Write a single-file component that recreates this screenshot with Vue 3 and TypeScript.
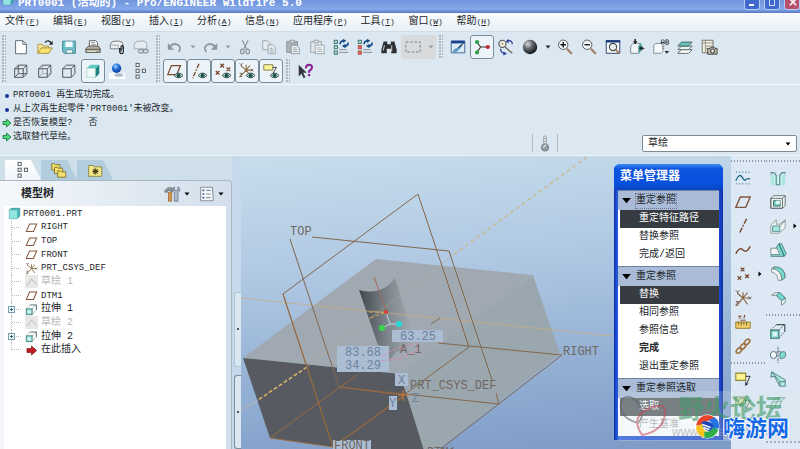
<script setup lang="ts">
import { ref } from 'vue'

interface Tool {
  id: string
  label: string
  pressed?: boolean
  arrow?: boolean
  framed?: boolean
}
interface MenuEntry {
  text: string
  key: string
}
interface Message {
  kind: 'info' | 'prompt'
  text: string
}
interface TreeNode {
  icon: string
  text: string
  cjk?: boolean
  dim?: boolean
  branch?: boolean
}
interface MenuSection {
  title: string
  items: { text: string; bold?: boolean; dim?: boolean }[]
  focus?: boolean
}

const menus: MenuEntry[] = [
  { text: '文件', key: 'F' },
  { text: '编辑', key: 'E' },
  { text: '视图', key: 'V' },
  { text: '插入', key: 'I' },
  { text: '分析', key: 'A' },
  { text: '信息', key: 'N' },
  { text: '应用程序', key: 'P' },
  { text: '工具', key: 'T' },
  { text: '窗口', key: 'W' },
  { text: '帮助', key: 'H' },
]

const toolRows: Tool[][][] = [
  [
    [
      { id: 'new', label: '新建' },
      { id: 'open', label: '打开' },
      { id: 'save', label: '保存' },
      { id: 'print', label: '打印' },
      { id: 'mail', label: '发送' },
      { id: 'link', label: '链接' },
    ],
    [
      { id: 'undo', label: '撤消', arrow: true },
      { id: 'redo', label: '重做', arrow: true },
      { id: 'cut', label: '剪切' },
      { id: 'copy', label: '复制' },
      { id: 'paste', label: '粘贴' },
      { id: 'paste2', label: '选择性粘贴' },
      { id: 'regen', label: '再生' },
      { id: 'regen2', label: '再生管理器' },
      { id: 'find', label: '查找' },
      { id: 'marquee', label: '选取框', arrow: true, framed: true },
    ],
    [
      { id: 'repaint', label: '重画' },
      { id: 'spin', label: '旋转中心', pressed: true },
      { id: 'orient', label: '定向模式' },
      { id: 'ball', label: '外观库', arrow: true },
      { id: 'zoomin', label: '放大' },
      { id: 'zoomout', label: '缩小' },
      { id: 'refit', label: '重新调整' },
      { id: 'reorient', label: '重定向' },
      { id: 'views', label: '已保存视图' },
      { id: 'layers', label: '层' },
      { id: 'viewmgr', label: '视图管理器' },
    ],
  ],
  [
    [
      { id: 'wire', label: '线框' },
      { id: 'hidden', label: '隐藏线' },
      { id: 'nohidden', label: '消隐' },
      { id: 'shaded', label: '着色', pressed: true },
      { id: 'realism', label: '增强的真实感' },
      { id: 'treeicon', label: '模型树' },
    ],
    [
      { id: 'vplane', label: '平面显示', pressed: true },
      { id: 'vaxis', label: '轴显示', pressed: true },
      { id: 'vpoint', label: '点显示', pressed: true },
      { id: 'vcsys', label: '坐标系显示', pressed: true },
      { id: 'vnote', label: '注释显示', pressed: true },
    ],
    [{ id: 'help', label: '上下文帮助' }],
  ],
]

const messages: Message[] = [
  { kind: 'info', text: 'PRT0001 再生成功完成。' },
  { kind: 'info', text: "从上次再生起零件'PRT0001'未被改变。" },
  { kind: 'prompt', text: '是否恢复模型?\u00a0\u00a0\u00a0否' },
  { kind: 'prompt', text: '选取替代草绘。' },
]

const treeNodes: TreeNode[] = [
  { icon: 'plane', text: 'RIGHT' },
  { icon: 'plane', text: 'TOP' },
  { icon: 'plane', text: 'FRONT' },
  { icon: 'csys', text: 'PRT_CSYS_DEF' },
  { icon: 'sketchdim', text: '草绘 1', cjk: true, dim: true },
  { icon: 'plane', text: 'DTM1' },
  { icon: 'extrude', text: '拉伸 1', cjk: true, branch: true },
  { icon: 'sketchdim', text: '草绘 2', cjk: true, dim: true },
  { icon: 'extrude', text: '拉伸 2', cjk: true, branch: true },
  { icon: 'insert', text: '在此插入', cjk: true },
]

const sections: MenuSection[] = [
  { title: '重定参照', focus: true, items: [{ text: '重定特征路径' }, { text: '替换参照' }, { text: '完成/返回' }] },
  {
    title: '重定参照',
    items: [{ text: '替换' }, { text: '相同参照' }, { text: '参照信息' }, { text: '完成', bold: true }, { text: '退出重定参照' }],
  },
  { title: '重定参照选取', items: [{ text: '选取' }, { text: '产生基准', dim: true }] },
]
const chosen = ref<number[]>([0, 0, 0])

const datumTools: Tool[][] = [
  [
    { id: 'sketch', label: '草绘' },
    { id: 'plane', label: '平面' },
    { id: 'axis', label: '轴' },
    { id: 'curve', label: '曲线' },
    { id: 'points', label: '点', arrow: true },
    { id: 'csys', label: '坐标系' },
    { id: 'analysis', label: '分析' },
    { id: 'chain', label: '参照' },
  ],
  [
    { id: 'note', label: '注释' },
    { id: 'note2', label: '传播注释' },
  ],
]
const featureTools: Tool[][] = [
  [
    { id: 'hole', label: '孔' },
    { id: 'shell', label: '壳' },
    { id: 'rib', label: '筋', arrow: true },
    { id: 'draft', label: '拔模' },
    { id: 'round', label: '倒圆角' },
    { id: 'chamfer', label: '倒角' },
  ],
  [
    { id: 'extrude', label: '拉伸' },
    { id: 'revolve', label: '旋转' },
    { id: 'sweep', label: '扫描' },
    { id: 'blend', label: '边界混合' },
  ],
]
const palette = [datumTools, featureTools]

const tabs = ['treeicon', 'folders', 'favorites']
const tabLabels = ['模型树', '文件夹浏览器', '收藏夹']
const activeTab = ref(0)
const filter = ref('草绘')
</script>

<template>
  <svg class="sprite" aria-hidden="true">
    <defs>
      <radialGradient id="gBall" cx=".35" cy=".3" r=".7">
        <stop offset="0" stop-color="#d8dcdf" /><stop offset=".45" stop-color="#666b70" /><stop offset="1" stop-color="#15181b" />
      </radialGradient>
      <radialGradient id="gBlue" cx=".4" cy=".3" r=".7">
        <stop offset="0" stop-color="#b7dcff" /><stop offset=".4" stop-color="#2a7be0" /><stop offset="1" stop-color="#073a9c" />
      </radialGradient>
    </defs>
    <symbol id="eye" viewBox="0 0 10 8"><path d="M0 4Q5-1.500 10 4Q5 9 0 4Z" fill="#cfe5df" stroke="#27433e" /><circle cx="5" cy="4" r="2.300" fill="#19584c" /></symbol>
    <symbol id="new" viewBox="0 0 20 20"><path d="M4 3h8l4 4V17.500H4Z" fill="#fff" stroke="#555e66" /><path d="M12 3v4h4" fill="none" stroke="#555e66" /></symbol>
    <symbol id="open" viewBox="0 0 20 20"><path d="M2 17V7h5l1 2h6v3" fill="#f7e69a" stroke="#a8923c" /><path d="M2 17l4-6h12l-4 6Z" fill="#f9e46d" stroke="#a08a32" /><path d="M10 5q4-4 7 1" fill="none" stroke="#222" stroke-width="1.300" /><path d="M18.500 3v4.500h-4Z" fill="#222" /></symbol>
    <symbol id="save" viewBox="0 0 20 20"><path d="M3 3.500h14v13.500h-12l-2-2Z" fill="#6fc2cb" stroke="#2f7f8c" /><path d="M6 4h8v6H6Z" fill="#f3fbfb" /><path d="M7 13h7v4H7Z" fill="#e5eef0" stroke="#47828b" stroke-width=".7" /></symbol>
    <symbol id="print" viewBox="0 0 20 20"><path d="M6 10V3h7l2 2v5" fill="#fff" stroke="#55595d" /><path d="M8 5h4M8 7h5M8 9h5" stroke="#888" /><path d="M2 12l3-3h11l2 3v4H2Z" fill="#b9b5a6" stroke="#4d4d49" /><path d="M2 12.500h16" stroke="#4d4d49" /><path d="M4 15h9" stroke="#e9e6d4" /></symbol>
    <symbol id="mail" viewBox="0 0 20 20"><path d="M2.500 12V7q1-3.500 5-3.500h5q4 0 4 4V12Z" fill="#edf1f3" stroke="#6b7075" /><path d="M2.500 8h9v4" fill="none" stroke="#9aa0a4" /><path d="M13 11v4q0 2.500 2 2.500t2-2.500V10q0-1.500-1.300-1.500T14.500 10v5" fill="none" stroke="#111" stroke-width="1.200" /></symbol>
    <symbol id="link" viewBox="0 0 20 20"><g opacity=".55"><path d="M2.500 12V7q1-3.500 5-3.500h5q4 0 4 4V12Z" fill="#edf1f3" stroke="#6b7075" /><rect x="7" y="13" width="6" height="3.500" rx="1.700" fill="none" stroke="#555" stroke-width="1.400" /><rect x="12" y="13" width="6" height="3.500" rx="1.700" fill="none" stroke="#555" stroke-width="1.400" /></g></symbol>
    <symbol id="undo" viewBox="0 0 20 20"><path d="M4 10q4-5 9-2.500q5 3 1 8" fill="none" stroke="#8d979e" stroke-width="1.900" /><path d="M2 5.500v7.500h7Z" fill="#8d979e" /></symbol>
    <symbol id="redo" viewBox="0 0 20 20"><path d="M16 10q-4-5-9-2.500q-5 3-1 8" fill="none" stroke="#8d979e" stroke-width="1.900" /><path d="M18 5.500v7.500h-7Z" fill="#8d979e" /></symbol>
    <symbol id="cut" viewBox="0 0 20 20"><g fill="none" stroke="#8a949b" stroke-width="1.300"><path d="M7 2.500l5 10M13.500 2.500l-5 10" /><ellipse cx="7" cy="15" rx="2" ry="2.600" /><ellipse cx="13" cy="15" rx="2" ry="2.600" /></g></symbol>
    <symbol id="copy" viewBox="0 0 20 20"><g fill="#e6ecef" stroke="#98a2a8"><path d="M3 3h5l3 3v7H3Z" /><path d="M9 7.500h5l3 3v7H9Z" /><path d="M11 11.500h3M11 13.500h4M11 15.500h4" /></g></symbol>
    <symbol id="paste" viewBox="0 0 20 20"><path d="M3 4h12v12H3Z" fill="#aab5ba" stroke="#87939a" /><path d="M6.500 2.500h5v3h-5Z" fill="#dce3e6" stroke="#87939a" /><path d="M8 8h6l3 3v6.500H8Z" fill="#edf1f3" stroke="#8a949b" /><path d="M10 11h4M10 13h5M10 15h5" stroke="#98a2a8" /></symbol>
    <symbol id="paste2" viewBox="0 0 20 20"><path d="M3 4h12v12H3Z" fill="#e0e6e9" stroke="#98a2a8" /><path d="M6.500 2.500h5v3h-5Z" fill="#dce3e6" stroke="#98a2a8" /><path d="M8 8h10v9.500H8Z" fill="#f2f5f6" stroke="#98a2a8" /><path d="M10 11h5M10 13h6M10 15h6" stroke="#a8b2b8" /></symbol>
    <symbol id="regen" viewBox="0 0 20 20"><g fill="#a8dcd6" stroke="#3d6b6a"><rect x="2.500" y="2.500" width="3.500" height="3.500" /><rect x="2.500" y="8.500" width="3.500" height="3.500" /><rect x="2.500" y="14.500" width="3.500" height="3.500" /></g><path d="M9 7q0-4 4-4M18 5q0 4-4 4" fill="none" stroke="#124a86" stroke-width="1.800" /><path d="M12 .800l4 2.200-4 2.500ZM15 6.500l-4 2.500 4 2.500Z" fill="#124a86" /><path d="M8 13h8M8 16h10" stroke="#7d878c" /></symbol>
    <symbol id="regen2" viewBox="0 0 20 20"><g stroke="#3d6b6a"><rect x="2.500" y="2.500" width="3.500" height="3.500" fill="#a8dcd6" /><g fill="#e06d60" stroke="#b14a40"><rect x="2.500" y="8.500" width="3.500" height="3.500" /><rect x="2.500" y="14.500" width="3.500" height="3.500" /></g></g><path d="M9 7q0-4 4-4M18 5q0 4-4 4" fill="none" stroke="#124a86" stroke-width="1.800" /><path d="M12 .800l4 2.200-4 2.500ZM15 6.500l-4 2.500 4 2.500Z" fill="#124a86" /><path d="M8 13h8M8 16h10" stroke="#7d878c" /></symbol>
    <symbol id="find" viewBox="0 0 20 20"><path d="M4 4h4v3h4V4h4l2.500 9v4h-6v-5h-5v5h-6v-4Z" fill="#2b2d30" /><path d="M5 8l-1.500 6M13 8v7" stroke="#b9bdc1" stroke-width="1.200" /></symbol>
    <symbol id="marquee" viewBox="0 0 20 20"><rect x="2" y="4.500" width="16" height="11" fill="none" stroke="#777d81" stroke-dasharray="3 1.800" /></symbol>
    <symbol id="repaint" viewBox="0 0 20 20"><path d="M2.500 3.500h15v13h-15Z" fill="#dcecf5" stroke="#3a5e92" /><path d="M2.500 3h15v3h-15Z" fill="#18428e" /><path d="M4 16q1-5 6-5l3-4 2 2-4 4q-2 3-7 3Z" fill="#5a9bc6" /><path d="M10 11l6-5" stroke="#33424e" stroke-width="1.200" /></symbol>
    <symbol id="spin" viewBox="0 0 20 20"><path d="M4.500 5l4 5h8M8.500 10l-4 6" fill="none" stroke="#3a2b28" stroke-width="1.200" /><circle cx="4.500" cy="4.500" r="2.300" fill="#2ca048" /><circle cx="16.500" cy="10" r="2.300" fill="#c22532" /><circle cx="4.500" cy="16" r="2.300" fill="#2ca048" /></symbol>
    <symbol id="orient" viewBox="0 0 20 20"><circle cx="6" cy="6.500" r="4" fill="#eef2ee" stroke="#555" stroke-width="1.200" /><circle cx="6" cy="6.500" r="1.500" fill="#c9b877" /><path d="M9 10l8 7" stroke="#6d6a63" stroke-width="1.500" /><path d="M12 3q5-1 5 4M4 12q0 5 5 5" fill="none" stroke="#2a3c9c" stroke-width="1.400" /><path d="M13 .800v5l-3.500-2ZM7 15l4 2.500-4 2Z" fill="#2a3c9c" /></symbol>
    <symbol id="ball" viewBox="0 0 20 20"><circle cx="10" cy="10" r="8" fill="url(#gBall)" /></symbol>
    <symbol id="zoomin" viewBox="0 0 20 20"><path d="M12 12l5.500 5.500" stroke="#a07a62" stroke-width="2.200" /><circle cx="8" cy="7.500" r="5.200" fill="#f3f7f8" stroke="#555b5f" stroke-width="1.100" /><path d="M5 7.500h6M8 4.500v6" stroke="#111" stroke-width="1.500" /></symbol>
    <symbol id="zoomout" viewBox="0 0 20 20"><path d="M12 12l5.500 5.500" stroke="#a07a62" stroke-width="2.200" /><circle cx="8" cy="7.500" r="5.200" fill="#f3f7f8" stroke="#555b5f" stroke-width="1.100" /><path d="M5 7.500h6" stroke="#111" stroke-width="1.500" /></symbol>
    <symbol id="refit" viewBox="0 0 20 20"><path d="M2.500 3h15v14h-15Z" fill="#f7fafb" stroke="#24365c" /><path d="M2 2.500h16v2.500H2Z" fill="#1a3a80" /><path d="M13 13l4 4" stroke="#a07a62" stroke-width="2" /><circle cx="10" cy="10" r="4" fill="#e5eff4" stroke="#444" stroke-width="1.200" /></symbol>
    <symbol id="reorient" viewBox="0 0 20 20"><path d="M3 9l3-3h8l-2 3v8H3Z" fill="#f1f7f7" stroke="#6e8584" /><path d="M12 9l3-3v8l-3 3Z" fill="#2f9c90" /><path d="M8 1v3M18 11.500h-2" stroke="#1a1a1a" stroke-width="1.600" /><path d="M5.500 3.500h5L8 7ZM16 9v5l-4-2.500Z" fill="#1a1a1a" /></symbol>
    <symbol id="views" viewBox="0 0 20 20"><path d="M2 8l2-2h8v9l-2 2H2Z" fill="#f7fafb" stroke="#7b898c" /><g fill="none" stroke="#333"><path d="M10.500 7V3l1-1h1l1 1v4M10.500 5h3M15.500 7V2h2l1 1v1l-1 .500h-2M17.500 4.500l1 1V6.500l-1 .500h-2" /></g><path d="M14 14.500h5l-2.500 3Z" fill="#222" /><path d="M13 9v4" stroke="#555" stroke-dasharray="1 1" /></symbol>
    <symbol id="layers" viewBox="0 0 20 20"><g stroke="#55605f"><path d="M2 17l4-4h12l-4 4Z" fill="#fff" /><path d="M2 13l4-4h12l-4 4Z" fill="#e5f4f1" /><path d="M2 9l4-4.500h12L14 9Z" fill="#61c6b5" /></g></symbol>
    <symbol id="viewmgr" viewBox="0 0 20 20"><path d="M2.500 2.500h12v14h-12Z" fill="#f6f2e4" stroke="#6b6a63" /><path d="M2.500 5.500h12M6 2.500v14M6 9h8M6 12h4" stroke="#8b8a80" /><path d="M8.500 11.500h3l1-1.500h3l1 1.500h2.500v6.500H8.500Z" fill="#b8b7ab" stroke="#3e3e3b" /><circle cx="14" cy="14.500" r="2.200" fill="#ecebe2" stroke="#222" /></symbol>
    <symbol id="wire" viewBox="0 0 20 20"><path d="M3 7.500h9.500V17H3ZM7 3.500h9.500V13H7ZM3 7.500l4-4M12.500 7.500l4-4M12.500 17l4-4M3 17l4-4" fill="none" stroke="#55585b" stroke-width="1.100" /></symbol>
    <symbol id="hidden" viewBox="0 0 20 20"><path d="M7 3.500V13h9.500M3 17l4-4" fill="none" stroke="#a3a9ad" /><path d="M3 7.500h9.500V17H3ZM3 7.500l4-4h9.500V13l-4 4M12.500 7.500l4-4" fill="none" stroke="#55585b" stroke-width="1.100" /></symbol>
    <symbol id="nohidden" viewBox="0 0 20 20"><path d="M3 7.500h9.500V17H3ZM3 7.500l4-4h9.500V13l-4 4M12.500 7.500l4-4" fill="none" stroke="#55585b" stroke-width="1.100" /></symbol>
    <symbol id="shaded" viewBox="0 0 20 20"><path d="M3 7l4-4h10l-4 4Z" fill="#5ec9c2" /><path d="M3 7h10v10H3Z" fill="#f1fbfa" stroke="#8ec3c0" stroke-width=".7" /><path d="M13 7l4-4v10l-4 4Z" fill="#1f837f" /></symbol>
    <symbol id="realism" viewBox="0 0 20 20"><path d="M1 12h18v7H1Z" fill="#fbfdff" /><ellipse cx="12" cy="14.500" rx="5" ry="2" fill="#b0bccb" /><circle cx="9.500" cy="7" r="5.200" fill="url(#gBlue)" /></symbol>
    <symbol id="treeicon" viewBox="0 0 20 20"><g fill="#f6f8f9" stroke="#4d5357"><rect x="4.500" y="1.500" width="3.500" height="3.500" /><rect x="4.500" y="8" width="3.500" height="3.500" /><rect x="4.500" y="14.500" width="3.500" height="3.500" /><rect x="11.500" y="8" width="3.500" height="3.500" /></g></symbol>
    <symbol id="vplane" viewBox="0 0 20 20"><path d="M6 4h10l-4 10H2Z" fill="none" stroke="#7c4a30" stroke-width="1.400" /><use href="#eye" x="9" y="11" width="10" height="8" /></symbol>
    <symbol id="vaxis" viewBox="0 0 20 20"><path d="M10 2L3 18" stroke="#7c4a30" stroke-width="1.500" stroke-dasharray="5 1.500 2 1.500" /><use href="#eye" x="9" y="11" width="10" height="8" /></symbol>
    <symbol id="vpoint" viewBox="0 0 20 20"><path d="M7 2l4 4M11 2L7 6M14 6l4 4M18 6l-4 4M2 10l4 4M6 10l-4 4" stroke="#7c4a30" stroke-width="1.500" /><use href="#eye" x="9" y="11" width="10" height="8" /></symbol>
    <symbol id="csys" viewBox="0 0 20 20"><path d="M10 10V3.500M10 10l7 0M10 10l-6 7M10 10L4 5M10 10l5-6M10 10l5 7" stroke="#8a6a42" stroke-width="1.300" /><path d="M2 1.500l2 2 2-2M4 3.500v2M16 8.500l3 3M19 8.500l-3 3M2 14h3l-3 4h3" fill="none" stroke="#5d4b39" stroke-width="1" /></symbol>
    <symbol id="vcsys" viewBox="0 0 20 20"><use href="#csys" width="18" height="18" /><use href="#eye" x="9" y="11" width="10" height="8" /></symbol>
    <symbol id="vnote" viewBox="0 0 20 20"><path d="M2 3h10v6H2Z" fill="#fbf59a" stroke="#7c7740" /><path d="M12 6h4l-4 7" fill="none" stroke="#333" /><use href="#eye" x="9" y="11" width="10" height="8" /></symbol>
    <symbol id="help" viewBox="0 0 20 20"><path d="M3 3v13l3-3 2.500 5 2-1-2.500-5h4Z" fill="#33373b" /><path d="M11 7q0-4 3.500-4t3.300 3.200q0 2-3.300 4v1.800" fill="none" stroke="#8a1c93" stroke-width="2.200" /><circle cx="14.500" cy="14.500" r="1.400" fill="#8a1c93" /></symbol>
    <symbol id="folders" viewBox="0 0 20 20"><g fill="#f5e26c" stroke="#7f7330"><path d="M2 3h3l1 1h5v6H2Z" /><path d="M5 7h3l1 1h5v6H5Z" /><path d="M8.500 11h3l1 1h5v6h-9Z" /></g></symbol>
    <symbol id="favorites" viewBox="0 0 20 20"><path d="M3 5h5l1 1.500h8.500v10.500H3Z" fill="#f4e987" stroke="#8c8242" /><path d="M10.300 8v7M7 11.500h7M8 9l5 5M13 9l-5 5" stroke="#464018" stroke-width="1.200" /></symbol>
    <symbol id="settings" viewBox="0 0 20 20"><path d="M1 6q4-5 9-2v3H7V6H4v2H1Z" fill="#8f9aa2" stroke="#59636a" stroke-width=".700" /><path d="M5 8h3.500v10H5Z" fill="#d6954a" stroke="#8a5a24" stroke-width=".700" /><path d="M11.500 2v4h4V2q4 3 0 7v9h-4V9q-4-4 0-7Z" fill="#aebecb" stroke="#566775" stroke-width=".800" /></symbol>
    <symbol id="show" viewBox="0 0 20 20"><path d="M3 2.500h13l1 15H3Z" fill="#f5f8fb" stroke="#7a858f" /><path d="M5 6h2M5 10h2M5 14h2" stroke="#3a5a8a" stroke-width="1.800" /><path d="M9 6h5M9 10h5M9 14h5" stroke="#8994a0" stroke-width="1.200" /></symbol>
    <symbol id="part" viewBox="0 0 20 20"><path d="M2 5l3-3h13v12l-4 4H2Z" fill="#44b9b8" stroke="#2f7f86" /><path d="M2 5h12v13H2Z" fill="#92e4e0" /></symbol>
    <symbol id="plane" viewBox="0 0 20 20"><path d="M7 4.500h11l-5 11.500H2Z" fill="none" stroke="#83583f" stroke-width="1.600" /></symbol>
    <symbol id="sketchdim" viewBox="0 0 20 20"><path d="M0 0h20v20H0Z" fill="#e7e8e6" /><path d="M2 15q5-1 6-6t4-1 6 7" fill="none" stroke="#b4b5b2" stroke-width="1.300" /></symbol>
    <symbol id="extrude" viewBox="0 0 20 20"><path d="M2 9h9v9H2Z" fill="#9ce0da" stroke="#2e6e6c" stroke-width="1.200" /><path d="M4.500 11.500h4v4h-4Z" fill="#e3f8f5" /><path d="M2 9l6-6M11 9l6-6M11 18l6-7" stroke="#4d6e6d" stroke-dasharray="2 1" /><path d="M8 3h9.500v8" fill="none" stroke="#3d5756" stroke-width="1.300" /></symbol>
    <symbol id="insert" viewBox="0 0 20 20"><path d="M3 7h7V3l8 7-8 7v-4H3Z" fill="#c11d23" stroke="#6e1014" /></symbol>
    <symbol id="prompt" viewBox="0 0 20 20"><path d="M2 7h7V2l9 8-9 8v-5H2Z" fill="#49d878" stroke="#1d6b38" stroke-width="1.600" /></symbol>
    <symbol id="sketch" viewBox="0 0 20 20"><path d="M2 3.500h17M2 16.500h17" stroke="#3d6f98" stroke-dasharray="1.500 2" /><path d="M2 13q4-9 7-4t4 3 5-1" fill="none" stroke="#1f6689" stroke-width="1.400" /></symbol>
    <symbol id="axis" viewBox="0 0 20 20"><path d="M14 2L6 18" stroke="#77492f" stroke-width="1.600" stroke-dasharray="6 1.500 2 1.500" /></symbol>
    <symbol id="curve" viewBox="0 0 20 20"><path d="M2 14q4-8 8-4t8-4" fill="none" stroke="#77492f" stroke-width="1.600" /></symbol>
    <symbol id="points" viewBox="0 0 20 20"><path d="M7.500 3l4 4M11.500 3l-4 4M12.500 10.500l4 4M16.500 10.500l-4 4M4 12.500l4 4M8 12.500l-4 4" stroke="#77492f" stroke-width="1.400" /></symbol>
    <symbol id="analysis" viewBox="0 0 20 20"><path d="M5 3l3 3M8 3L5 6M12 2l-1 4" stroke="#7c4a30" stroke-width="1.300" /><path d="M2 10h16v7H2Z" fill="#efcf68" stroke="#92722d" /><path d="M5 10v3M8 10v4M11 10v3M14 10v4" stroke="#6f5620" /><path d="M7 8h6" stroke="#7c4a30" /></symbol>
    <symbol id="chain" viewBox="0 0 20 20"><g fill="none" stroke="#a0713f" stroke-width="1.800"><ellipse cx="5.500" cy="15" rx="3.600" ry="2.300" transform="rotate(-45 5.500 15)" /><ellipse cx="10" cy="10.500" rx="3.600" ry="2.300" transform="rotate(-45 10 10.500)" /><ellipse cx="14.500" cy="5.500" rx="3.600" ry="2.300" transform="rotate(-45 14.500 5.500)" /></g></symbol>
    <symbol id="note" viewBox="0 0 20 20"><path d="M2 3.500h11v8H2Z" fill="#fbf48d" stroke="#8d8333" stroke-width="1.200" /><path d="M13 7h5l-5 10M13 17v-4M13 17l3-2" fill="none" stroke="#333" stroke-width="1.100" /></symbol>
    <symbol id="note2" viewBox="0 0 20 20"><path d="M2 3.500h11v8H2Z" fill="#e3ecaa" stroke="#7b9a62" stroke-width="1.200" /><circle cx="9" cy="9" r="4" fill="none" stroke="#6ba278" stroke-width="1.300" /><path d="M13 7h5l-5 10M13 17v-4M13 17l3-2" fill="none" stroke="#5d7c5f" stroke-width="1.100" /></symbol>
    <symbol id="hole" viewBox="0 0 20 20"><path d="M2 7h4v11H2ZM14 7h4v11h-4Z" fill="#a9e8e2" /><path d="M6 8h8v10H6Z" fill="#d3f4f0" /><path d="M1.500 4h4l2.500 3v10.500h4V7l2.500-3h4" fill="none" stroke="#4f8a89" stroke-width="1.300" /><path d="M1.500 7l3-3M18.500 7l-3-3" stroke="#7aa5a4" /></symbol>
    <symbol id="shell" viewBox="0 0 20 20"><path d="M2 6l3-3h13v11l-3 3H2Z" fill="#eef3f2" stroke="#61706f" /><path d="M2 6h13v11H2ZM15 6l3-3" fill="none" stroke="#61706f" /><path d="M5 8.500h7.500v6H5Z" fill="#6ccfc7" stroke="#3c6664" /><path d="M7.500 8.500h5v4h-5Z" fill="#d9f5f1" /></symbol>
    <symbol id="rib" viewBox="0 0 20 20"><path d="M2 9l6-6v5h4l6-5v9l-7 6H2Z" fill="#eef4f3" stroke="#8b9a9a" /><path d="M4 10h8v6H4Z" fill="#a2e8e0" stroke="#53908c" /><path d="M12 10l6-6" stroke="#6b7f7e" /></symbol>
    <symbol id="draft" viewBox="0 0 20 20"><path d="M2 17h15l2-3L14 3h-3Z" fill="#7edcd4" stroke="#4d7b79" /><path d="M2 8h7l3 7H2Z" fill="#eff5f4" stroke="#748a89" /><path d="M11 3l6 14" stroke="#33716e" stroke-width="1.200" /></symbol>
    <symbol id="round" viewBox="0 0 20 20"><path d="M3 4l3-2q12 0 12 12l-4 3Q14 5 3 4Z" fill="#77d8d0" stroke="#4d6e6d" /><path d="M3 4v4q7 1 7 9h4Q14 5 3 4Z" fill="#f4f7f6" stroke="#7d908f" /></symbol>
    <symbol id="chamfer" viewBox="0 0 20 20"><path d="M3 7l4-3h5l6 6v5l-4 3v-5L8 7Z" fill="#eef4f3" stroke="#748a89" /><path d="M8 7l4-3 6 6-4 3Z" fill="#77d8d0" stroke="#3f7b77" /></symbol>
    <symbol id="revolve" viewBox="0 0 20 20"><path d="M10 1v18" stroke="#4b5f66" stroke-dasharray="3 1.200" /><ellipse cx="5" cy="10" rx="3.500" ry="4" fill="#f2f6f5" stroke="#567" /><path d="M12 8q6-4 6.500 1t-6 5Z" fill="#7edcd4" stroke="#4d7b79" /><path d="M8 7q3-3 6 0" fill="none" stroke="#678" /></symbol>
    <symbol id="sweep" viewBox="0 0 20 20"><path d="M3 2l15 9v7h-6L6 7 2 8Z" fill="#aeeae4" stroke="#4f7977" /><path d="M3 2l9 11h6M12 13v5" fill="none" stroke="#4f7977" /></symbol>
    <symbol id="blend" viewBox="0 0 20 20"><path d="M2 16q0-10 8-12l8 0q-6 3-6 12Z" fill="#c8eee6" stroke="#6f9d94" /><path d="M4 9l10-1M7 16q0-9 7-12" fill="none" stroke="#6f9d94" /></symbol>
    <symbol id="thermo" viewBox="0 0 20 20"><path d="M8.500 3q1.500-2 3 0v8h-3Z" fill="#eef2f3" stroke="#929ca1" /><path d="M8.500 5h3M8.500 8h3" stroke="#929ca1" /><circle cx="10" cy="15" r="4" fill="#8f9a9e" stroke="#6e7a7f" /><path d="M8 15l3-3" stroke="#e6ecee" stroke-width="1.400" /></symbol>
    <symbol id="down" viewBox="0 0 10 10"><path d="M2.500 3.500h5L5 6.500Z" /></symbol>
    <symbol id="right" viewBox="0 0 10 10"><path d="M3.500 2.500v5L6.500 5Z" /></symbol>
    <symbol id="tri" viewBox="0 0 12 8"><path d="M1 1h10L6 7Z" /></symbol>
  </svg>

  <div class="window">
    <header class="titlebar">
      <svg class="app-icon"><use href="#part" /></svg>
      <h1>PRT0001 (活动的) - Pro/ENGINEER Wildfire 5.0</h1>
      <div class="caption">
        <button aria-label="最小化"><i class="min"></i></button>
        <button aria-label="最大化"><i class="max"></i></button>
        <button class="close" aria-label="关闭">
          <svg viewBox="0 0 10 10"><path d="M1 1l8 8M9 1l-8 8" stroke="#fff" stroke-width="2" /></svg>
        </button>
      </div>
    </header>

    <nav class="menubar">
      <button v-for="m in menus" :key="m.key">{{ m.text }}<span class="key">(<u>{{ m.key }}</u>)</span></button>
    </nav>

    <div class="toolbars">
      <div v-for="(row, r) in toolRows" :key="r" class="toolrow">
        <template v-for="(group, g) in row" :key="g">
          <span class="grip"></span>
          <span v-for="t in group" :key="t.id" class="tool" :class="{ framed: t.framed }">
            <button :class="{ pressed: t.pressed }" :aria-label="t.label"><svg><use :href="'#' + t.id" /></svg></button>
            <button v-if="t.arrow" class="arrow" :class="{ faint: g === 1 }" :aria-label="t.label + '选项'"><svg><use href="#down" /></svg></button>
          </span>
        </template>
      </div>
    </div>

    <section class="messages">
      <ul>
        <li v-for="(m, i) in messages" :key="i">
          <svg v-if="m.kind === 'prompt'"><use href="#prompt" /></svg>
          <i v-else class="bullet"></i>
          <span>{{ m.text }}</span>
        </li>
      </ul>
      <div class="status">
        <span class="gauge"><svg><use href="#thermo" /></svg></span>
        <label class="filter">
          <select v-model="filter" aria-label="选取过滤器">
            <option>草绘</option>
          </select>
          <svg><use href="#down" /></svg>
        </label>
      </div>
    </section>

    <main>
      <aside class="navigator">
        <div class="tabs">
          <button
            v-for="(t, i) in tabs"
            :key="t"
            :class="{ active: i === activeTab }"
            :aria-label="tabLabels[i]"
            @click="activeTab = i"
          >
            <svg><use :href="'#' + t" /></svg>
          </button>
        </div>
        <div class="panel">
          <div class="panel-head">
            <h2>模型树</h2>
            <button aria-label="设置"><svg><use href="#settings" /></svg><svg class="tiny"><use href="#down" /></svg></button>
            <button aria-label="显示"><svg><use href="#show" /></svg><svg class="tiny"><use href="#down" /></svg></button>
          </div>
          <div class="tree-box">
            <ul class="tree">
              <li class="root"><svg><use href="#part" /></svg><span>PRT0001.PRT</span></li>
              <li v-for="(n, i) in treeNodes" :key="i" :class="{ cjk: n.cjk, dim: n.dim }">
                <span class="rail">
                  <button v-if="n.branch" :aria-label="'展开 ' + n.text"></button>
                </span>
                <svg><use :href="'#' + n.icon" /></svg>
                <span>{{ n.text }}</span>
              </li>
            </ul>
          </div>
        </div>
      </aside>

      <div class="splitter">
        <span class="handle"></span>
        <span class="handle lower"></span>
      </div>

      <div class="viewport">
        <svg class="scene" viewBox="241 156 490 293" preserveAspectRatio="xMinYMin slice">
          <defs>
            <linearGradient id="gCyl" x1="0" y1="0" x2="1" y2="0">
              <stop offset="0" stop-color="#43484d" /><stop offset=".5" stop-color="#7d868c" /><stop offset="1" stop-color="#a6b0b5" />
            </linearGradient>
          </defs>
          <polygon points="376,259 533,275 400,374 243,358" fill="#a0a9b1" />
          <polygon points="533,275 560,354 425,460 400,374" fill="#9ba7ae" />
          <polygon points="243,358 400,374 427,460 270,438" fill="#575b61" />
          <path d="M359 290Q382 296 395 278L416 345L396 352L389 361L388 347L378 345Z" fill="url(#gCyl)" />
          <path d="M241 298L612 336" stroke="#c9ad80" stroke-width="1" opacity=".75" />
          <path d="M587 157L453 255" stroke="#c6bc93" stroke-width="1.500" stroke-dasharray="4 3" />
          <path d="M453 255L307 367" stroke="#b8aa90" opacity=".5" />
          <path d="M307 367L258 400" stroke="#dbb567" stroke-width="1.500" stroke-dasharray="4 2" />
          <path d="M258 400L241 410" stroke="#b5b7b0" />
          <g fill="none" stroke="#83664c">
            <path d="M418 194L283 294L333 447L469 347Z" />
            <path d="M312 237L449 251L492 380M496 393L499 404L339 387L290 239" />
            <path d="M438 343L562 355L438 451" />
            <path d="M357 375L270 438L333 447" stroke="#9a6b41" />
            <path d="M374 277L388 315" stroke="#a56a58" />
            <path d="M431 324L440 318" />
          </g>
          <path d="M283 294L333 447L403 397M339 387L403 395" fill="none" stroke="#a0693b" />
          <path d="M369 312L386 312M370 318L384 313" stroke="#cfa558" stroke-dasharray="4 2" />
          <g fill="#aabdd3">
            <rect x="392" y="330" width="51" height="12" />
            <rect x="337" y="346" width="52" height="26" />
            <rect x="395" y="373" width="13" height="13" />
            <rect x="389" y="396" width="8" height="14" />
            <rect x="333" y="440" width="38" height="12" />
          </g>
          <path d="M382 356L393 350L417 343L416 351L401 358L380 361" fill="none" stroke="#d388b4" stroke-dasharray="4 2" />
          <path d="M386 312L390 324L399 324M390 324L382 328" fill="none" stroke="#c1d6da" />
          <circle cx="386" cy="312" r="2" fill="#dd3c36" />
          <circle cx="382" cy="328" r="3" fill="#37d650" />
          <circle cx="399" cy="324" r="3" fill="#25dbd9" />
          <path d="M398 395l11 0M403 390v11" stroke="#cd7b35" />
          <g class="tags">
            <text x="290" y="235">TOP</text>
            <text x="563" y="355">RIGHT</text>
            <text x="410" y="389">PRT_CSYS_DEF</text>
            <text x="334" y="449">FRONT</text>
            <text x="427" y="456">DTM1</text>
            <text x="400" y="353">A_1</text>
          </g>
          <g class="dims">
            <text x="400" y="340">63.25</text>
            <text x="345" y="356">83.68</text>
            <text x="345" y="369">34.29</text>
            <text x="398" y="384">X</text>
            <text x="389" y="407">Y</text>
            <text x="412" y="402">Z</text>
          </g>
        </svg>

        <section class="manager">
          <h2>菜单管理器</h2>
          <div v-for="(s, i) in sections" :key="i" class="section">
            <h3><svg><use href="#tri" /></svg><span :class="{ focus: s.focus }">{{ s.title }}</span></h3>
            <ul>
              <li v-for="(it, j) in s.items" :key="j">
                <button :class="{ chosen: chosen[i] === j, bold: it.bold, dim: it.dim }" @click="chosen[i] = j">{{ it.text }}</button>
              </li>
            </ul>
          </div>
        </section>
      </div>

      <aside class="palette">
        <div v-for="(col, c) in palette" :key="c" class="column">
          <div v-for="(group, g) in col" :key="g" class="group">
            <span v-for="t in group" :key="t.id" class="tool">
              <button :aria-label="t.label"><svg><use :href="'#' + t.id" /></svg></button>
              <svg v-if="t.arrow" class="fly"><use href="#right" /></svg>
            </span>
          </div>
        </div>
      </aside>
    </main>

    <div class="watermark">
      <svg class="rings" viewBox="0 0 50 48">
        <path d="M4 8Q-2 26 20 32Q28 24 20 12Q12 2 4 8Z" fill="none" stroke="#5c5f66" stroke-width="2" />
        <path d="M24 44Q12 26 30 18Q48 10 47 22Q46 40 24 44Z" fill="none" stroke="#c4485c" stroke-width="2" />
      </svg>
      <span class="forum">野火论坛</span>
      <span class="url">www.proewildfire.cn</span>
    </div>
    <div class="brand">
      <svg viewBox="0 0 24 24">
        <circle cx="12" cy="12" r="11.500" fill="#fff" />
        <path d="M12 1A11 11 0 0 0 1 11L8 11Q9 6 16 6L19 3.500Q16 1 12 1Z" fill="#e8452f" />
        <path d="M1 12Q1 20 8 22.500L11 17Q6 14 8 9Z" fill="#f6c31f" />
        <path d="M9 23Q19 24 22.500 15L17 12Q15 18 9 17Z" fill="#2fae4c" />
        <path d="M23 14Q24 7 19 3L13 6Q18 9 17 14Z" fill="#2474e4" />
        <path d="M6 8Q13 5 18 11L15 16Q11 17 8 13Z" fill="#1947b8" />
        <path d="M7 10l8 3M8 13l6 2" stroke="#fff" stroke-width="1.500" />
      </svg>
      <strong>嗨游网</strong>
    </div>
  </div>
</template>

<style>
body {
  background: #dbe8f2;
}
</style>

<style scoped>
.sprite {
  position: absolute;
  width: 0;
  height: 0;
}
.window {
  position: relative;
  display: flex;
  flex-direction: column;
  height: 100vh;
  overflow: hidden;
  background: #dbe8f2;
  color: #22262a;
  font: 10px/14px 'Liberation Mono', 'Noto Sans CJK SC', monospace;
}
button {
  margin: 0;
  padding: 0;
  border: 0;
  background: none;
  color: inherit;
  font: inherit;
}
ul,
h1,
h2,
h3 {
  margin: 0;
  padding: 0;
  list-style: none;
}
svg {
  display: block;
  flex: none;
}

.titlebar {
  display: flex;
  align-items: flex-end;
  height: 13px;
  flex: none;
  overflow: hidden;
  background: linear-gradient(#6f93dd, #86a9ea 70%, #5878c6);
  color: #fff;
}
.app-icon {
  width: 12px;
  height: 12px;
  margin: 0 4px 7px 2px;
}
.titlebar h1 {
  flex: 1;
  padding-bottom: 2px;
  font: bold 11px/16px 'Liberation Mono', 'Noto Sans CJK SC', monospace;
  white-space: pre;
}
.caption {
  display: flex;
  gap: 4px;
  padding: 0 0 3px;
}
.caption button {
  display: flex;
  align-items: flex-end;
  width: 16px;
  height: 16px;
  padding: 3px 4px;
  box-sizing: border-box;
  border: 1px solid #b9cdf5;
  border-radius: 3px;
  background: #3f68cc;
}
.caption .close {
  background: #b8506c;
}
.caption svg {
  width: 8px;
  height: 8px;
}
.min {
  width: 5px;
  height: 2px;
  background: #fff;
}
.max {
  width: 6px;
  height: 6px;
  border: 1px solid #cfdcf8;
}

.menubar {
  display: flex;
  flex: none;
  gap: 13px;
  height: 19px;
  padding-left: 5px;
  background: linear-gradient(#f8fbfd, #e9f1f7);
  border-bottom: 1px solid #d2dde5;
  box-sizing: border-box;
}
.menubar button {
  min-width: 35px;
  text-align: left;
}
.menubar .key {
  font-size: 8px;
}

.toolbars {
  flex: none;
  padding: 3px 0 1px;
  border-bottom: 1px solid #f4f8fa;
}
.toolrow {
  display: flex;
  height: 24px;
}
.grip {
  width: 4px;
  margin: 0 3px;
  background: radial-gradient(circle at 1px 1px, #aab7c0 1px, transparent 1px) 0 0 / 3px 3px;
}
.grip:first-child {
  margin-left: 2px;
}
.tool {
  display: flex;
}
.tool button {
  display: flex;
  align-items: center;
  justify-content: center;
  width: 24px;
  height: 24px;
  box-sizing: border-box;
}
.tool button svg {
  width: 18px;
  height: 18px;
}
.tool .pressed {
  border: 1px solid #7a8d9a;
  border-radius: 3px;
  background: #edf4f9;
}
.tool .arrow {
  width: 11px;
}
.tool .arrow svg {
  width: 10px;
  height: 10px;
  fill: #22262a;
}
.tool .faint svg {
  fill: #939da4;
}
.framed {
  background: #d8dadb;
  border-radius: 2px;
}

.messages {
  display: flex;
  flex: none;
  justify-content: space-between;
  height: 71px;
  box-sizing: border-box;
  padding: 4px 3px 3px 2px;
  border-bottom: 1px solid #eff5f9;
}
.messages ul {
  display: grid;
  grid-auto-rows: 1fr;
  height: 55px;
  font-size: 9px;
  line-height: 13px;
}
.messages li {
  display: flex;
  align-items: center;
  gap: 1px;
  white-space: pre;
}
.messages li svg {
  width: 10px;
  height: 10px;
}
.bullet {
  width: 4px;
  height: 4px;
  margin: 0 3px;
  border-radius: 50%;
  background: #1a30a4;
}
.status {
  display: flex;
  align-items: flex-end;
  gap: 84px;
}
.gauge {
  padding: 0 3px;
  border: solid #abb9c3;
  border-width: 0 1px;
}
.gauge svg {
  width: 18px;
  height: 18px;
}
.filter {
  position: relative;
  display: block;
}
.filter select {
  display: block;
  width: 155px;
  height: 17px;
  padding: 0 5px;
  appearance: none;
  border: 1px solid #7d8b95;
  border-radius: 2px;
  background: #fff;
  color: #222;
  font: inherit;
}
.filter svg {
  position: absolute;
  right: 4px;
  top: 4px;
  width: 10px;
  height: 10px;
  pointer-events: none;
}

main {
  display: flex;
  flex: 1;
  min-height: 0;
}
.navigator {
  display: flex;
  flex-direction: column;
  width: 232px;
  background: #cfdfea;
}
.tabs {
  display: flex;
  padding: 4px 0 0 5px;
}
.tabs button {
  display: flex;
  align-items: center;
  width: 36px;
  height: 20px;
  padding-left: 9px;
  clip-path: polygon(0 0, 26px 0, 36px 100%, 0 100%);
  background: #b2cddd;
}
.tabs .active {
  background: linear-gradient(#fff, #f1f5f9);
}
.tabs svg {
  width: 18px;
  height: 18px;
}
.panel {
  display: flex;
  flex: 1;
  flex-direction: column;
  padding: 0 5px 0 4px;
  border: solid #a9b7c4;
  border-width: 1px 1px 0 0;
  border-top-right-radius: 4px;
  background: linear-gradient(90deg, #f5f8fb, #d2dfeb);
}
.panel-head {
  display: flex;
  align-items: center;
  gap: 6px;
  height: 25px;
  padding: 0 0 0 17px;
}
.panel-head h2 {
  flex: 1;
  font-size: 11px;
}
.panel-head button {
  display: flex;
  align-items: center;
}
.panel-head svg {
  width: 18px;
  height: 18px;
}
.panel-head .tiny {
  width: 10px;
  height: 10px;
}
.tree-box {
  flex: 1;
  padding-top: 1px;
  background: #fff;
}
.tree {
  display: grid;
  grid-auto-rows: 1fr;
  height: 150px;
  padding-left: 4px;
  font-size: 9px;
  line-height: 12px;
}
.tree li {
  display: flex;
  align-items: center;
  gap: 3px;
}
.tree .cjk {
  font-size: 10px;
}
.tree .dim {
  color: #b6b8ba;
}
.tree svg {
  width: 13px;
  height: 13px;
}
.tree .root {
  gap: 2px;
}
.rail {
  display: flex;
  align-items: center;
  align-self: stretch;
  width: 10px;
  margin-left: 3px;
  border-left: 1px dotted #b5bcc2;
  background: linear-gradient(90deg, #b5bcc2 50%, transparent 50%) 0 50% / 2px 1px repeat-x;
}
.tree li:last-child .rail {
  align-self: flex-start;
  height: 7px;
  background-position: 0 100%;
}
.rail button {
  width: 7px;
  height: 7px;
  box-sizing: border-box;
  margin-left: -4px;
  border: 1px solid #78a3ac;
  background:
    linear-gradient(#376a78, #376a78) 50% / 3px 1px no-repeat,
    linear-gradient(#376a78, #376a78) 50% / 1px 3px no-repeat,
    #e8f4f5;
}

.splitter {
  display: flex;
  flex-direction: column;
  align-items: flex-end;
  gap: 8px;
  width: 9px;
  box-sizing: border-box;
  padding-top: 136px;
  background: #c5d9ea;
}
.handle {
  display: grid;
  place-items: center;
  width: 7px;
  height: 80px;
  box-sizing: border-box;
  border: 1px solid #b2c6d5;
  border-right: 0;
  border-radius: 3px 0 0 3px;
  background: #d9e7f1;
}
.handle::after {
  content: '';
  width: 2px;
  height: 2px;
  background: #4a5864;
}
.lower {
  border-color: #7e8f9c;
}

.viewport {
  position: relative;
  flex: 1;
  min-width: 0;
  overflow: hidden;
  background: linear-gradient(175deg, #c7deec, #b1c9e3 35%, #93b0d4 70%, #7c9ac6);
}
.scene {
  width: 100%;
  height: 100%;
}
.scene text {
  font-size: 12px;
  fill: #6f6660;
}
.scene .dims text {
  fill: #70829c;
}

.manager {
  position: absolute;
  top: 8px;
  right: 8px;
  width: 109px;
  box-sizing: border-box;
  padding: 0 4px 4px;
  border-radius: 6px 6px 0 0;
  background: linear-gradient(90deg, #0c2ea8, #2458dc 3px, #1c46c8 106px, #0c2ea8);
}
.manager h2 {
  margin: 0 -4px;
  padding: 0 6px;
  border-radius: 6px 6px 0 0;
  background: linear-gradient(#3c8cf8, #0c52de 5px, #0850dc 20px, #0a43c0);
  color: #fff;
  font-size: 12px;
  line-height: 26px;
}
.manager h3 {
  display: flex;
  align-items: center;
  gap: 4px;
  height: 20px;
  padding-left: 3px;
  border-top: 1px solid #6d82a5;
  box-sizing: border-box;
  background: #a9bbd6;
  font-size: 10px;
  font-weight: normal;
}
.manager h3 svg {
  width: 11px;
  height: 7px;
}
.focus {
  outline: 1px dotted #6a7990;
}
.manager ul {
  padding: 0 0 2px 2px;
  background: #fff;
}
.manager li button {
  display: block;
  width: 100%;
  height: 18px;
  padding-left: 19px;
  text-align: left;
}
.manager .chosen {
  background: #373c42;
  color: #fff;
}
.manager .section:last-child .chosen {
  background: #5a5f62;
}
.manager .bold {
  font-weight: bold;
}
.manager .dim {
  color: #a9adb0;
}

.palette {
  display: flex;
  width: 69px;
  box-sizing: border-box;
  padding-top: 4px;
  background: #dce8f3;
}
.column {
  width: 35px;
}
.group {
  padding-top: 6px;
  background: repeating-linear-gradient(90deg, #8c99a3 0 1px, transparent 1px 3px) 0 0 / 100% 2px no-repeat;
}
.group + .group {
  padding-top: 5px;
  border-top: 4px solid transparent;
}
.column:last-child .group:last-child {
  padding-bottom: 26px;
  border-bottom: 2px dotted #a6b2bb;
}
.palette .fly {
  width: 10px;
  height: 10px;
  align-self: center;
}

.watermark {
  position: absolute;
  right: 0;
  bottom: 8px;
  display: grid;
  grid-template-columns: 54px 1fr;
  width: 182px;
  height: 50px;
  background: rgba(215, 226, 235, 0.25);
  pointer-events: none;
  white-space: nowrap;
}
.rings {
  grid-row: span 2;
  width: 50px;
  height: 48px;
  opacity: 0.55;
}
.forum {
  padding-left: 6px;
  color: #3f9a68;
  font: bold 26px/32px 'Noto Sans CJK SC', sans-serif;
  opacity: 0.6;
}
.url {
  color: #8f9fb0;
  font: 12px/14px 'Liberation Sans', sans-serif;
  opacity: 0.6;
}
.brand {
  position: absolute;
  right: 11px;
  bottom: 10px;
  display: flex;
  align-items: center;
  gap: 3px;
  pointer-events: none;
}
.brand svg {
  width: 25px;
  height: 25px;
}
.brand strong {
  color: #1569e6;
  font: bold 22px/26px 'Noto Sans CJK SC', sans-serif;
  text-shadow: 1px 0 #fff, -1px 0 #fff, 0 1px #fff, 0 -1px #fff;
}
</style>
